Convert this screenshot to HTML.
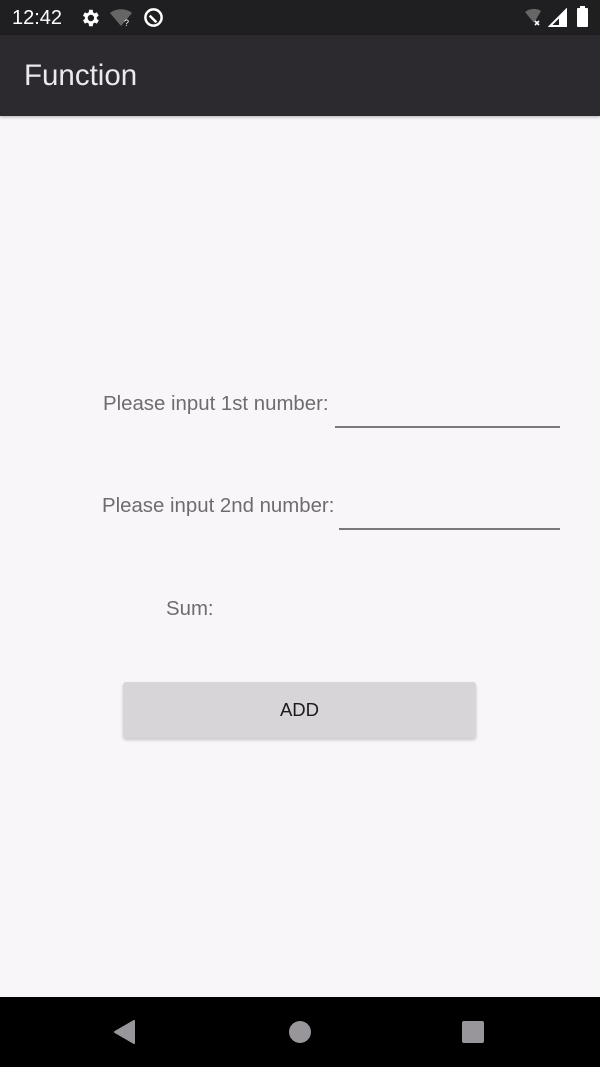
<!DOCTYPE html>
<html><head><meta charset="utf-8"><style>
*{margin:0;padding:0;box-sizing:border-box}
body{width:600px;height:1067px;overflow:hidden;background:#f8f6f9;font-family:"Liberation Sans",Roboto,sans-serif;position:relative}
.sb{position:absolute;left:0;top:0;width:600px;height:35px;background:#1f1e20;color:#fff}
.ab{position:absolute;left:0;top:35px;width:600px;height:81px;background:#2c2a2e;box-shadow:0 1px 3px rgba(0,0,0,.3)}
.ab span{position:absolute;left:24px;top:24px;font-size:29.5px;color:#ece9ee}
.t{position:absolute;color:#6e6c70;font-size:20.4px;white-space:nowrap}
.ul{position:absolute;height:2px;background:#7a787c}
.btn{position:absolute;left:123px;top:682px;width:353px;height:56px;background:#d7d5d8;border-radius:3px;box-shadow:0 2px 3px rgba(0,0,0,.2);text-align:center;line-height:56px;font-size:18.5px;color:#1b1b1d}
.nb{position:absolute;left:0;top:997px;width:600px;height:70px;background:#000}
</style></head><body>
<div class="sb">
<span style="position:absolute;left:12px;top:7px;font-size:20px">12:42</span>
<svg style="position:absolute;left:79px;top:7px" width="22" height="22" viewBox="0 0 24 24"><path fill="#fff" d="M19.4 13a7.5 7.5 0 000-2l2.1-1.6-2-3.5-2.5 1a7 7 0 00-1.7-1L15 3h-4l-.4 2.9a7 7 0 00-1.7 1l-2.5-1-2 3.5L6.5 11a7.5 7.5 0 000 2l-2.1 1.6 2 3.5 2.5-1a7 7 0 001.7 1L11 21h4l.4-2.9a7 7 0 001.7-1l2.5 1 2-3.5zM13 15.5a3.5 3.5 0 110-7 3.5 3.5 0 010 7z"/></svg>
<svg style="position:absolute;left:110px;top:9px" width="24" height="18" viewBox="0 0 24 18"><path fill="#666" d="M0 4C6-1 16-1 22 4l-11 13z"/><text x="14" y="17" font-size="9" fill="#fff" font-family="Liberation Sans">?</text></svg>
<svg style="position:absolute;left:143px;top:7px" width="21" height="21" viewBox="0 0 22 22"><circle cx="11" cy="11" r="8.5" fill="none" stroke="#fff" stroke-width="2.6"/><path d="M7 9l7 7" stroke="#fff" stroke-width="2.6"/></svg>
<svg style="position:absolute;left:525px;top:8px" width="22" height="20" viewBox="0 0 22 20"><path fill="#666" d="M0 4C5 0 12 0 16 3l-7 12z"/><path d="M10 13l4 4M14 13l-4 4" stroke="#fff" stroke-width="1.6"/></svg>
<svg style="position:absolute;left:548px;top:8px" width="20" height="20" viewBox="0 0 20 20"><path d="M18 2v16H2z" fill="none" stroke="#fff" stroke-width="2"/><path d="M11 9v9H18V2z" fill="#fff"/></svg>
<div style="position:absolute;left:577px;top:8px;width:11px;height:19px;background:#fff;border-radius:1px"></div>
<div style="position:absolute;left:580px;top:6px;width:5px;height:3px;background:#fff"></div>
</div>
<div class="ab"><span>Function</span></div>
<div class="t" style="left:103px;top:393px">Please input 1st number:</div>
<div class="ul" style="left:335px;top:426px;width:225px"></div>
<div class="t" style="left:102px;top:495px">Please input 2nd number:</div>
<div class="ul" style="left:339px;top:528px;width:221px"></div>
<div class="t" style="left:166px;top:598px">Sum:</div>
<div class="btn">ADD</div>
<div class="nb">
<svg style="position:absolute;left:113px;top:22px" width="24" height="26" viewBox="0 0 24 26"><path d="M21 2v22L2 13z" fill="#98969a" stroke="#98969a" stroke-linejoin="round" stroke-width="2"/></svg>
<div style="position:absolute;left:289px;top:24px;width:22px;height:22px;border-radius:50%;background:#98969a"></div>
<div style="position:absolute;left:462px;top:24px;width:22px;height:22px;border-radius:2px;background:#98969a"></div>
</div>
</body></html>
